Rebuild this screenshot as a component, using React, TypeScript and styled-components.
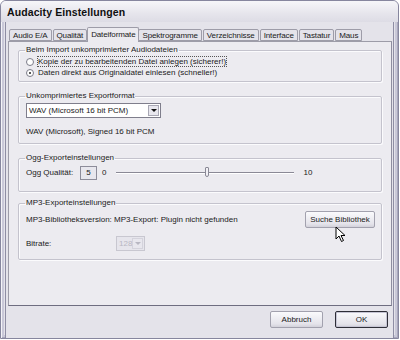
import React from "react";
import styled, { createGlobalStyle } from "styled-components";

const GlobalStyle = createGlobalStyle`
  html, body {
    margin: 0;
    padding: 0;
    background: #ffffff;
  }
  body {
    font-family: "Liberation Sans", Arial, sans-serif;
    font-size: 8px;
    color: #1a1a1a;
  }
`;

const Window = styled.div`
  position: relative;
  width: 399px;
  height: 339px;
  box-sizing: border-box;
  border: 1px solid #86869e;
  border-top-left-radius: 6px;
  border-top-right-radius: 6px;
  background: #e4e3ea;
  box-shadow: inset 1px 0 0 #f4f4f8, inset -1px 0 0 #a9a8bc, inset 0 -1px 0 #a9a8bc,
    inset 2px 0 0 #c9c8d8, inset -2px 0 0 #c9c8d8, inset 0 -2px 0 #c9c8d8,
    inset 3px 0 0 #c9c8d8, inset -3px 0 0 #c9c8d8, inset 0 -3px 0 #c9c8d8;
  display: flex;
  flex-direction: column;
  overflow: hidden;
`;

const TitleBar = styled.div`
  height: 21px;
  flex: none;
  display: flex;
  align-items: center;
  padding-left: 6px;
  background: linear-gradient(#f6f6f9, #e6e5ec 60%, #dddce5);
  font-weight: bold;
  font-size: 10.5px;
  letter-spacing: 0.1px;
  color: #101010;
`;

const Body = styled.div`
  flex: 1;
  display: flex;
  flex-direction: column;
  margin: 0 4px 0 4px;
  padding: 5px 1px 0 2px;
  border-left: 1px solid #8e8da4;
  border-right: 1px solid #8e8da4;
  background: #e4e3ea;
`;

const TabRow = styled.div`
  display: flex;
  align-items: flex-end;
  height: 14px;
  padding-left: 1px;
  position: relative;
  z-index: 1;
`;

const Tab = styled.div<{ $active?: boolean }>`
  height: ${(p) => (p.$active ? 15 : 12)}px;
  box-sizing: border-box;
  padding: ${(p) => (p.$active ? "2px 3px 0" : "1px 3px 0")};
  margin: ${(p) => (p.$active ? "0 -1px -1px" : "0 1px 0 0")};
  background: ${(p) => (p.$active ? "#ecebf0" : "#e4e3ea")};
  border: 1px solid #9d9ca8;
  border-bottom: ${(p) => (p.$active ? "none" : "1px solid #9d9ca8")};
  border-radius: 2px 2px 0 0;
  font-size: 8px;
  line-height: 10px;
  letter-spacing: -0.12px;
  white-space: nowrap;
  color: #1a1a1a;
`;

const Panel = styled.div`
  height: 265px;
  box-sizing: border-box;
  border: 1px solid #9d9ca8;
  border-right-color: #8e8da0;
  border-bottom-color: #6e6d80;
  background: #ecebf0;
  padding: 3px 9px 0 9px;
  display: flex;
  flex-direction: column;
`;

const Group = styled.fieldset<{ $h: number; $gap?: number }>`
  margin: ${(p) => p.$gap ?? 0}px 0 0 0;
  height: ${(p) => p.$h}px;
  flex: none;
  box-sizing: border-box;
  border: 1px solid #c4c3cd;
  box-shadow: inset 1px 1px 0 #fbfbfd, 1px 1px 0 #fbfbfd;
  border-radius: 2px;
  padding: 0 6px 0 7px;
  display: flex;
  flex-direction: column;
  min-width: 0;
  overflow: hidden;
`;

const Legend = styled.legend`
  padding: 0 1px;
  margin-left: -1px;
  font-size: 8px;
  line-height: 10px;
  color: #1a1a1a;
`;

const RadioRow = styled.label<{ $top?: number }>`
  display: flex;
  align-items: center;
  gap: 4px;
  height: 11px;
  margin-top: ${(p) => p.$top ?? 0}px;
  font-size: 8px;
`;

const RadioDot = styled.span<{ $on?: boolean }>`
  width: 8px;
  height: 8px;
  box-sizing: border-box;
  border-radius: 50%;
  border: 1px solid #7b7b88;
  background: #fff;
  position: relative;
  &::after {
    content: "";
    display: ${(p) => (p.$on ? "block" : "none")};
    position: absolute;
    left: 2px;
    top: 2px;
    width: 2px;
    height: 2px;
    border-radius: 50%;
    background: #202020;
  }
`;

const Focused = styled.span`
  outline: 1px dotted #555;
  outline-offset: 0px;
`;

const Select = styled.div<{ $w: number; $disabled?: boolean }>`
  width: ${(p) => p.$w}px;
  height: 15px;
  box-sizing: border-box;
  border: 1px solid ${(p) => (p.$disabled ? "#c8c7d0" : "#7f7e8c")};
  background: ${(p) => (p.$disabled ? "#e6e5ec" : "#ffffff")};
  display: flex;
  align-items: center;
  justify-content: space-between;
  padding-left: 2px;
  font-size: 8px;
  color: ${(p) => (p.$disabled ? "#b8b7c2" : "#1a1a1a")};
`;

const Arrow = styled.span<{ $disabled?: boolean }>`
  width: 11px;
  height: 11px;
  margin-right: 1px;
  box-sizing: border-box;
  background: #e8e7ee;
  border: 1px solid ${(p) => (p.$disabled ? "#d4d3dc" : "#a8a7b4")};
  display: flex;
  align-items: center;
  justify-content: center;
  &::after {
    content: "";
    border-left: 3px solid transparent;
    border-right: 3px solid transparent;
    border-top: 3px solid ${(p) => (p.$disabled ? "#b8b7c2" : "#111")};
  }
`;

const Line = styled.div<{ $top?: number }>`
  display: flex;
  align-items: center;
  margin-top: ${(p) => p.$top ?? 0}px;
  font-size: 8px;
  line-height: 10px;
  white-space: nowrap;
`;

const Label = styled.span<{ $w?: number; $left?: number }>`
  width: ${(p) => (p.$w ? `${p.$w}px` : "auto")};
  margin-left: ${(p) => p.$left ?? 0}px;
  flex: none;
`;

const NumBox = styled.span`
  width: 17px;
  height: 14px;
  box-sizing: border-box;
  border: 1px solid #8d8c9a;
  background: #e8e7ee;
  display: flex;
  align-items: center;
  justify-content: center;
  margin-left: 1px;
`;

const Slider = styled.div`
  position: relative;
  width: 178px;
  height: 14px;
  margin: 0 9px 0 10px;
  &::before {
    content: "";
    position: absolute;
    left: 0;
    right: 0;
    top: 6px;
    height: 1px;
    background: #8a8996;
    border-bottom: 1px solid #ffffff;
  }
`;

const Thumb = styled.span`
  position: absolute;
  left: 89px;
  top: 1px;
  width: 4px;
  height: 10px;
  background: #f2f1f6;
  border: 1px solid #8a8996;
  border-radius: 1px 1px 2px 2px;
  box-sizing: border-box;
`;

const Button = styled.div<{ $w: number; $default?: boolean }>`
  width: ${(p) => p.$w}px;
  height: 17px;
  flex: none;
  box-sizing: border-box;
  display: flex;
  align-items: center;
  justify-content: center;
  border: 1px solid ${(p) => (p.$default ? "#2e2e38" : "#a2a1ae")};
  border-radius: 2px;
  background: linear-gradient(#fafafc, #e4e3ea 80%, #d2d1da);
  box-shadow: ${(p) => (p.$default ? "inset 0 0 0 1px #c6c5d4" : "none")};
  font-size: 8px;
  color: #1a1a1a;
`;

const Spacer = styled.span`
  flex: 1;
`;

const Footer = styled.div`
  display: flex;
  justify-content: flex-end;
  gap: 12px;
  padding: 5px 4px 0 0;
`;

const Cursor = styled.svg`
  position: absolute;
  left: 334px;
  top: 225px;
`;

export default function App() {
  const tabs = [
    "Audio E/A",
    "Qualität",
    "Dateiformate",
    "Spektrogramme",
    "Verzeichnisse",
    "Interface",
    "Tastatur",
    "Maus",
  ];
  return (
    <>
      <GlobalStyle />
      <Window>
        <TitleBar>Audacity Einstellungen</TitleBar>
        <Body>
          <TabRow>
            {tabs.map((t) => (
              <Tab key={t} $active={t === "Dateiformate"}>
                {t}
              </Tab>
            ))}
          </TabRow>
          <Panel>
            <Group $h={37}>
              <Legend>Beim Import unkomprimierter Audiodateien</Legend>
              <RadioRow $top={1}>
                <RadioDot />
                <Focused>Kopie der zu bearbeitenden Datei anlegen (sicherer!)</Focused>
              </RadioRow>
              <RadioRow>
                <RadioDot $on />
                Daten direkt aus Originaldatei einlesen (schneller!)
              </RadioRow>
            </Group>
            <Group $h={53} $gap={9}>
              <Legend>Unkomprimiertes Exportformat</Legend>
              <Line $top={2}>
                <Select $w={135}>
                  WAV (Microsoft 16 bit PCM)
                  <Arrow />
                </Select>
              </Line>
              <Line $top={9}>WAV (Microsoft), Signed 16 bit PCM</Line>
            </Group>
            <Group $h={39} $gap={9}>
              <Legend>Ogg-Exporteinstellungen</Legend>
              <Line $top={3}>
                <Label $w={53}>Ogg Qualität:</Label>
                <NumBox>5</NumBox>
                <Label $left={5}>0</Label>
                <Slider>
                  <Thumb />
                </Slider>
                <Label>10</Label>
              </Line>
            </Group>
            <Group $h={62} $gap={6}>
              <Legend>MP3-Exporteinstellungen</Legend>
              <Line $top={3}>
                <Label $w={88}>MP3-Bibliotheksversion:</Label>
                <Label>MP3-Export: Plugin nicht gefunden</Label>
                <Spacer />
                <Button $w={70}>Suche Bibliothek</Button>
              </Line>
              <Line $top={8}>
                <Label $w={90}>Bitrate:</Label>
                <Select $w={29} $disabled>
                  128
                  <Arrow $disabled />
                </Select>
              </Line>
            </Group>
          </Panel>
          <Footer>
            <Button $w={53}>Abbruch</Button>
            <Button $w={53} $default>
              OK
            </Button>
          </Footer>
        </Body>
        <Cursor width="12" height="17" viewBox="0 0 12 17">
          <path
            d="M1 1 L1 13 L4 10 L6.5 15.5 L8.5 14.5 L6 9.5 L10 9.5 Z"
            fill="#ffffff"
            stroke="#000000"
            strokeWidth="1"
            strokeLinejoin="round"
          />
        </Cursor>
      </Window>
    </>
  );
}
